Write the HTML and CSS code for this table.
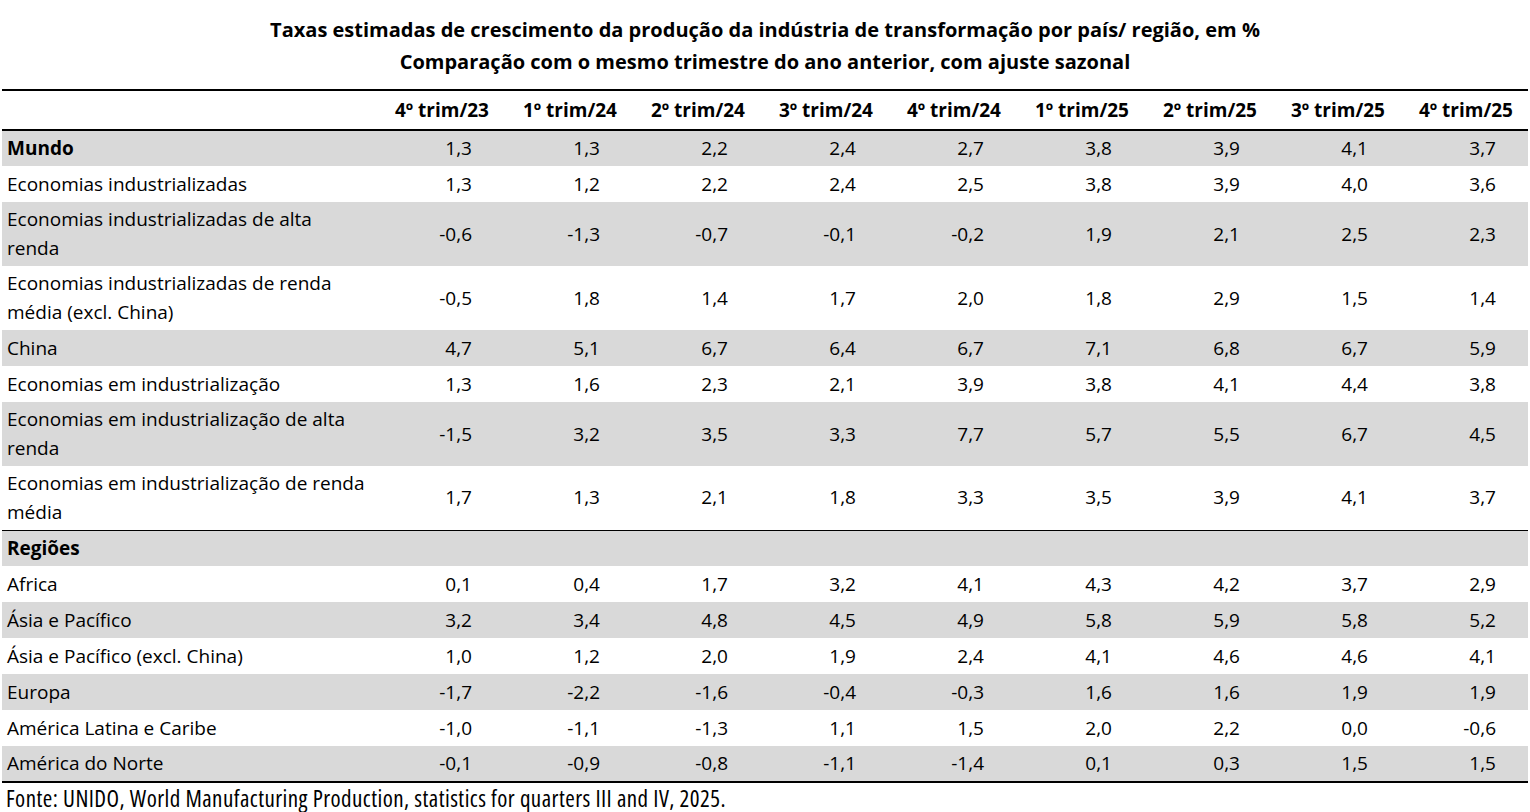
FILE: index.html
```html
<!DOCTYPE html>
<html lang="pt">
<head>
<meta charset="utf-8">
<title>Taxas estimadas de crescimento</title>
<link rel="stylesheet" href="styles.css">
</head>
<body>
<div class="page">
  <div class="title">
    <div class="title-line">Taxas estimadas de crescimento da produção da indústria de transformação por país/ região, em %</div>
    <div class="title-line">Comparação com o mesmo trimestre do ano anterior, com ajuste sazonal</div>
  </div>
  <table class="data">
    <colgroup>
      <col class="c-label">
      <col class="c-num"><col class="c-num"><col class="c-num"><col class="c-num"><col class="c-num"><col class="c-num"><col class="c-num"><col class="c-num"><col class="c-num">
    </colgroup>
    <thead>
      <tr>
        <th class="h-label"></th>
        <th>4º trim/23</th><th>1º trim/24</th><th>2º trim/24</th><th>3º trim/24</th><th>4º trim/24</th><th>1º trim/25</th><th>2º trim/25</th><th>3º trim/25</th><th>4º trim/25</th>
      </tr>
    </thead>
    <tbody>
      <tr class="shade bold"><td class="label">Mundo</td><td>1,3</td><td>1,3</td><td>2,2</td><td>2,4</td><td>2,7</td><td>3,8</td><td>3,9</td><td>4,1</td><td>3,7</td></tr>
      <tr><td class="label">Economias industrializadas</td><td>1,3</td><td>1,2</td><td>2,2</td><td>2,4</td><td>2,5</td><td>3,8</td><td>3,9</td><td>4,0</td><td>3,6</td></tr>
      <tr class="shade tall"><td class="label">Economias industrializadas de alta<br>renda</td><td>-0,6</td><td>-1,3</td><td>-0,7</td><td>-0,1</td><td>-0,2</td><td>1,9</td><td>2,1</td><td>2,5</td><td>2,3</td></tr>
      <tr class="tall"><td class="label">Economias industrializadas de renda<br>média (excl. China)</td><td>-0,5</td><td>1,8</td><td>1,4</td><td>1,7</td><td>2,0</td><td>1,8</td><td>2,9</td><td>1,5</td><td>1,4</td></tr>
      <tr class="shade"><td class="label">China</td><td>4,7</td><td>5,1</td><td>6,7</td><td>6,4</td><td>6,7</td><td>7,1</td><td>6,8</td><td>6,7</td><td>5,9</td></tr>
      <tr><td class="label">Economias em industrialização</td><td>1,3</td><td>1,6</td><td>2,3</td><td>2,1</td><td>3,9</td><td>3,8</td><td>4,1</td><td>4,4</td><td>3,8</td></tr>
      <tr class="shade tall"><td class="label">Economias em industrialização de alta<br>renda</td><td>-1,5</td><td>3,2</td><td>3,5</td><td>3,3</td><td>7,7</td><td>5,7</td><td>5,5</td><td>6,7</td><td>4,5</td></tr>
      <tr class="tall"><td class="label">Economias em industrialização de renda<br>média</td><td>1,7</td><td>1,3</td><td>2,1</td><td>1,8</td><td>3,3</td><td>3,5</td><td>3,9</td><td>4,1</td><td>3,7</td></tr>
      <tr class="shade bold section"><td class="label">Regiões</td><td></td><td></td><td></td><td></td><td></td><td></td><td></td><td></td><td></td></tr>
      <tr><td class="label">Africa</td><td>0,1</td><td>0,4</td><td>1,7</td><td>3,2</td><td>4,1</td><td>4,3</td><td>4,2</td><td>3,7</td><td>2,9</td></tr>
      <tr class="shade"><td class="label">Ásia e Pacífico</td><td>3,2</td><td>3,4</td><td>4,8</td><td>4,5</td><td>4,9</td><td>5,8</td><td>5,9</td><td>5,8</td><td>5,2</td></tr>
      <tr><td class="label">Ásia e Pacífico (excl. China)</td><td>1,0</td><td>1,2</td><td>2,0</td><td>1,9</td><td>2,4</td><td>4,1</td><td>4,6</td><td>4,6</td><td>4,1</td></tr>
      <tr class="shade"><td class="label">Europa</td><td>-1,7</td><td>-2,2</td><td>-1,6</td><td>-0,4</td><td>-0,3</td><td>1,6</td><td>1,6</td><td>1,9</td><td>1,9</td></tr>
      <tr><td class="label">América Latina e Caribe</td><td>-1,0</td><td>-1,1</td><td>-1,3</td><td>1,1</td><td>1,5</td><td>2,0</td><td>2,2</td><td>0,0</td><td>-0,6</td></tr>
      <tr class="shade last"><td class="label">América do Norte</td><td>-0,1</td><td>-0,9</td><td>-0,8</td><td>-1,1</td><td>-1,4</td><td>0,1</td><td>0,3</td><td>1,5</td><td>1,5</td></tr>
    </tbody>
  </table>
  <div class="source">Fonte: UNIDO, World Manufacturing Production, statistics for quarters III and IV, 2025.</div>
</div>
</body>
</html>
```
FILE: styles.css
```css
html, body {
  margin: 0;
  padding: 0;
  background: #ffffff;
}
body {
  font-family: "Open Sans", Lato, "Liberation Sans", sans-serif;
  color: #000000;
}
.page {
  width: 1526px;
  padding: 0 0 0 2px;
}
.title {
  padding-top: 14px;
  height: 89px;
  box-sizing: border-box;
  text-align: center;
  font-weight: bold;
  font-size: 20px;
}
.title-line {
  line-height: 32px;
}
.data {
  width: 1526px;
  border-collapse: collapse;
  table-layout: fixed;
  font-size: 19px;
}
.c-label { width: 374px; }
.c-num { width: 128px; }
.data thead tr {
  border-top: 2px solid #000;
  border-bottom: 2px solid #000;
}
.data th {
  height: 38px;
  padding: 0 15px 0 0;
  text-align: right;
  font-weight: bold;
  white-space: nowrap;
  vertical-align: middle;
}
.data td {
  height: 36px;
  padding: 0 32px 0 0;
  text-align: right;
  vertical-align: middle;
  line-height: 29px;
  box-sizing: border-box;
  white-space: nowrap;
}
.data td.label {
  text-align: left;
  padding: 0 4px 0 5px;
}
.data tr.tall td { height: 64px; }
.data tr.shade td { background: #d9d9d9; }
.data tr.bold td.label { font-weight: bold; }
.data tr.section { border-top: 1px solid #000; }
.data tr.last { border-bottom: 2px solid #000; }
.source {
  padding: 1px 0 0 4px;
  font-size: 23px;
  line-height: 28px;
  font-stretch: 75%;
  letter-spacing: 0.45px;
}
```
